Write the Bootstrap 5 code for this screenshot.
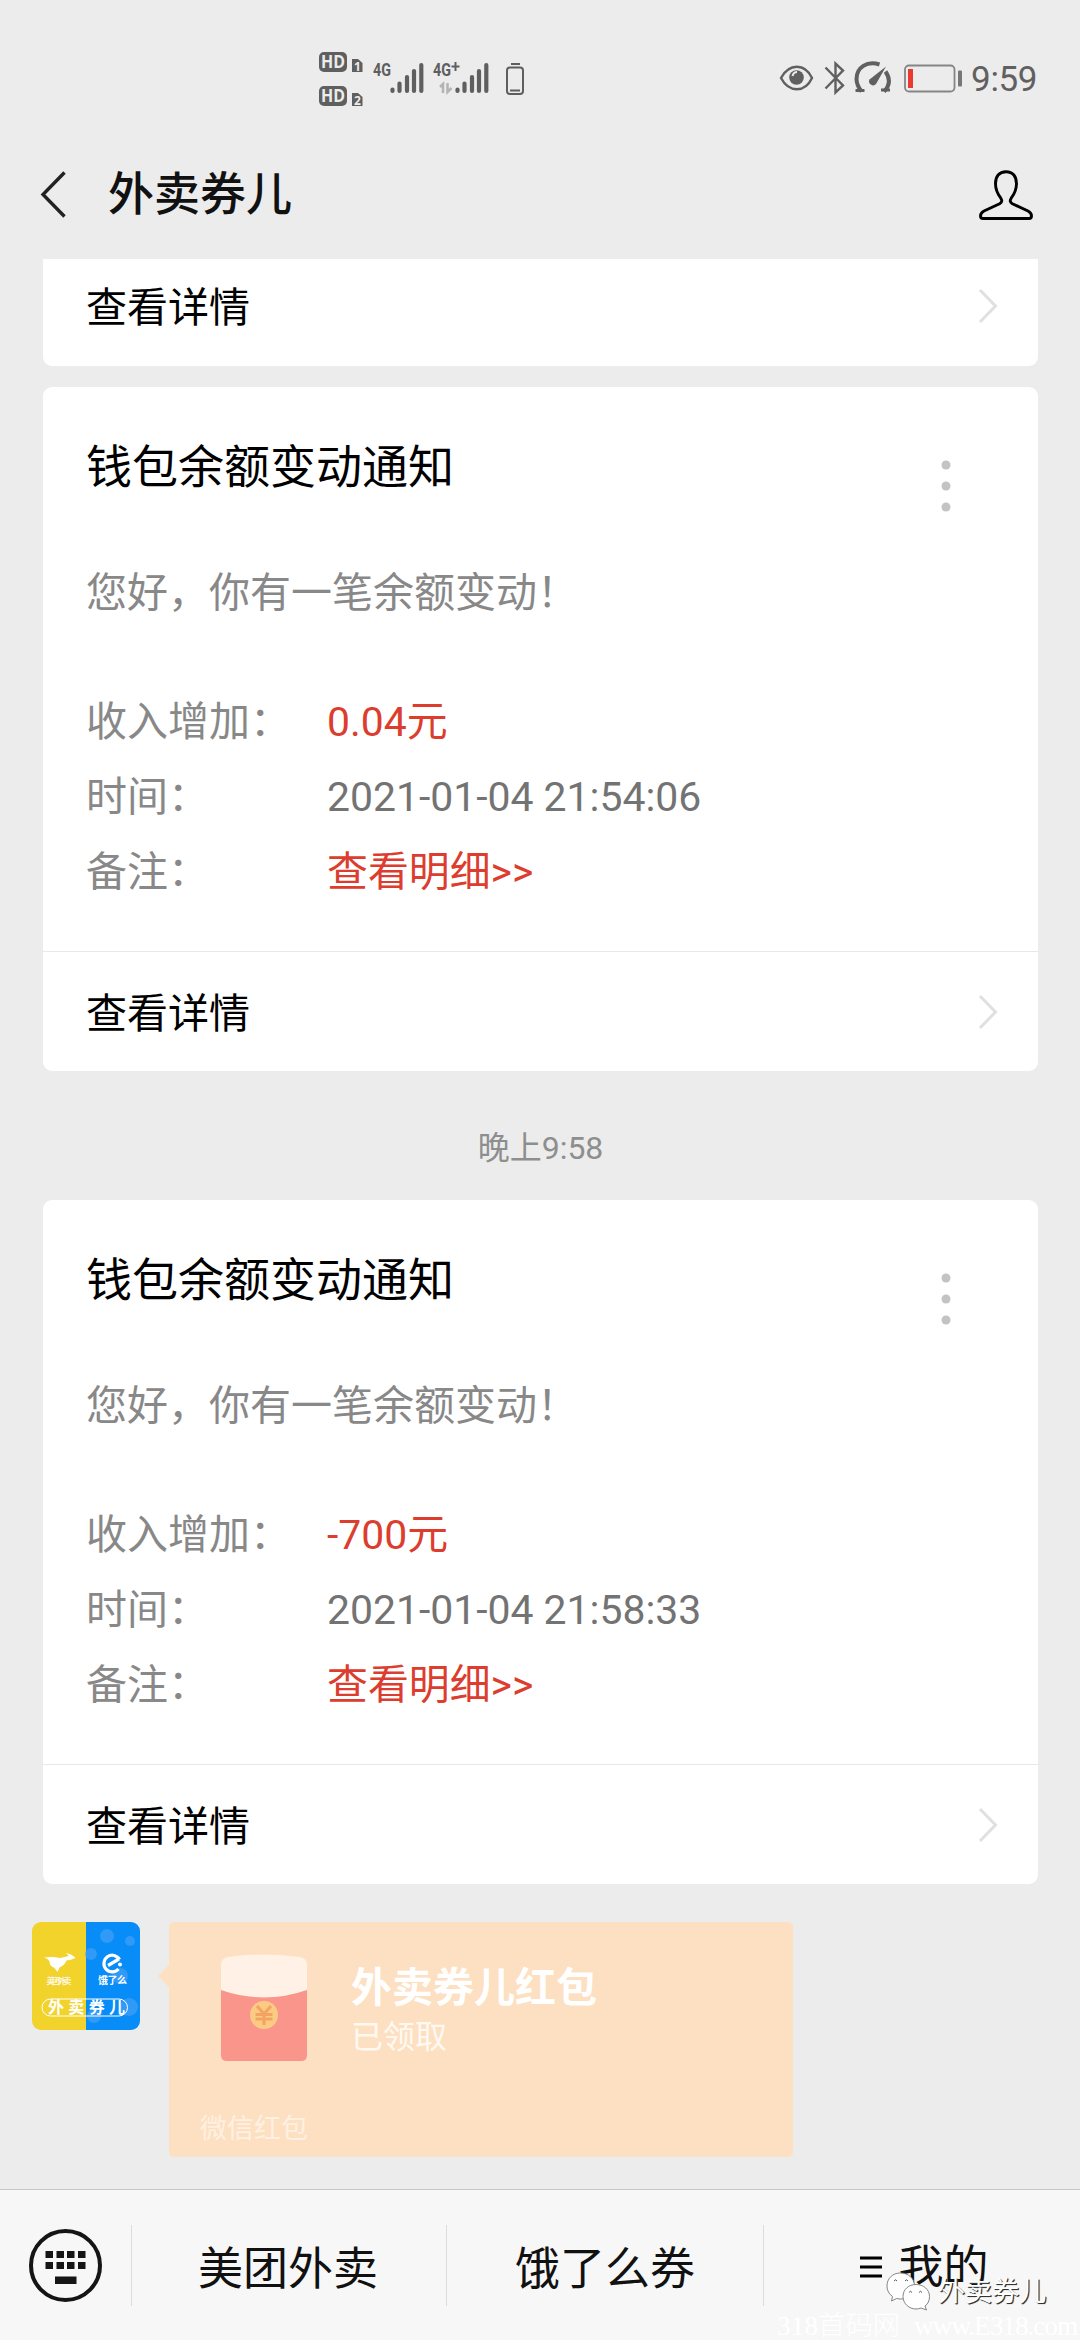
<!DOCTYPE html>
<html lang="zh-CN">
<head>
<meta charset="utf-8">
<meta name="viewport" content="width=device-width, initial-scale=1">
<title>外卖券儿</title>
<link href="https://cdn.jsdelivr.net/npm/bootstrap@5.3.0/dist/css/bootstrap.min.css" rel="stylesheet">
<style>
body{background:#ececec;font-family:Roboto,"Noto Sans CJK SC",sans-serif;color:#000;font-size:41px;line-height:1;height:2340px;overflow:hidden}
svg{display:block;flex:none}
.phone{width:1080px;height:2340px}
.statusbar{height:150px;padding:0 43px 0 319px}
.sb-left,.sb-right{height:156px}
.clock{font-size:35px;color:#606060;margin-left:8px;letter-spacing:-.4px;padding-top:2px}
.topbar{height:109px;padding:0 47px 0 40px}
.topbar h1{font-size:46px;font-weight:500;margin:0 0 0 42px;color:#111;line-height:89px}
.topbar svg{margin-top:20px}
.feed{padding:0 42px 0 43px}
.notice{border:0;border-radius:9px;background:#fff;--bs-card-border-width:0}
.notice.clipped{border-radius:0 0 9px 9px;height:107px;margin-bottom:21px}
.notice-main{height:564px;padding:0 87px 0 43px}
.notice-main h2{font-size:46px;font-weight:400;margin:0;height:158px;line-height:160px}
.notice-main .dots{margin-top:73px}
.greet{color:#888;height:94px;line-height:96px;margin:0}
.rows{margin:46px 0 0}
.rows dt{font-weight:400;color:#888;width:241px;line-height:75px}
.rows dd{margin:0;line-height:75px;color:#737373;font-size:40.900px}
.rows .hot{color:#dc3d2e}
.notice-foot{border-top:1px solid #e8e8e8;height:120px;padding:0 40px 0 43px;line-height:1}
.notice-foot span{padding-top:5px}
.clipped .notice-foot{border:0;height:93px}
.stamp{height:129px;line-height:155px;font-size:32px;color:#8e8e8e}
.msg{padding:38px 0 0 32px;height:305px}
.avatar-pic{width:108px;height:108px;border-radius:9px;overflow:hidden}
.packet{width:624px;height:235px;background:#fde0c2;border-radius:5px;margin-left:29px;color:#fff;padding:32px 0 0 52px}
.packet:before{content:"";position:absolute;left:-11px;top:42px;border:solid transparent;border-width:12px 12px 12px 0;border-right-color:#fde0c2}
.pk-info{margin-left:44px}
.pk-title{font-size:41px;font-weight:700;line-height:48px;margin-top:10px}
.pk-state{font-size:32px;line-height:36px;margin-top:7px;color:#fff9f2}
.pk-src{font-size:27px;line-height:30px;color:#fff0e2;margin:52px 0 0 -21px}
.menu{height:151px;background:#f7f7f7;border-top:1px solid #c6c6c6;font-size:45px;color:#111}
.menu .kb{width:131px;padding-left:28px}
.menu .item{height:81px;border-left:1px solid #dcdcdc;line-height:81px;padding-top:4px}
.menu .i1{width:315px;padding-right:2px}.menu .i2{width:317px}.menu .i3{width:317px;padding-left:5px}
.mark-wx{left:886px;top:2272px;color:#fff;font-size:27px;line-height:40px;letter-spacing:.1px;text-shadow:1px 1px 0 #333,1px 1px 1px #555}
.mark-site{left:777px;top:2309px;color:#fff;font-size:27.4px;line-height:34px;white-space:pre;font-family:"Liberation Serif","Noto Sans CJK SC",serif;font-weight:300}
.mark-site span{letter-spacing:-1.1px;margin-left:7px}
</style>
<script src="https://cdn.jsdelivr.net/npm/bootstrap@5.3.0/dist/js/bootstrap.bundle.min.js"></script>
</head>
<body>
<svg width="0" height="0" class="position-absolute">
  <symbol id="chev" viewBox="0 0 20 36"><path d="M2 2 17.500 18 2 34" fill="none" stroke="#e0e0e0" stroke-width="3"/></symbol>
  <symbol id="dots" viewBox="0 0 10 52"><g fill="#c3c3c3"><circle cx="5" cy="5" r="4.500"/><circle cx="5" cy="26" r="4.500"/><circle cx="5" cy="47" r="4.500"/></g></symbol>
</svg>
<div class="phone position-relative d-flex flex-column">
  <header>
    <div class="statusbar d-flex justify-content-between">
      <div class="sb-left d-flex align-items-center">
        <svg width="210" height="60" viewBox="319 48 210 60" fill="#5f5f5f" font-family="Roboto" font-weight="700">
          <rect x="319" y="52" width="28" height="20" rx="5"/><rect x="319" y="86" width="28" height="20" rx="5"/>
          <path d="M352 59h6l4.500 4v9h-10.500zM352 93h6l4.500 4v9h-10.500z"/>
          <g fill="#ececec" font-family="Open Sans"><text x="321" y="68" font-size="17" textLength="24" lengthAdjust="spacingAndGlyphs">HD</text><text x="321" y="102" font-size="17" textLength="24" lengthAdjust="spacingAndGlyphs">HD</text><text x="354" y="71" font-size="12">1</text><text x="354" y="105" font-size="12">2</text></g>
          <text x="373" y="76" font-size="19" textLength="18" lengthAdjust="spacingAndGlyphs">4G</text>
          <text x="433" y="76" font-size="19" textLength="18" lengthAdjust="spacingAndGlyphs">4G</text>
          <path d="M455.500 62v9M451.500 66.500h8" stroke="#5f5f5f" stroke-width="2"/>
          <g stroke="#5f5f5f" stroke-width="4.200" stroke-linecap="round"><path d="M392.500 89.500v1.500M399.500 83.500v7.500M407 77v14M414 71v20M421.300 65v26M457.500 89.500v1.500M464.500 83.500v7.500M472 77v14M479 71v20M486.300 65v26"/></g>
          <path d="M440 87l3-3v9M447.500 83v9l4-4" fill="none" stroke="#b4b4b4" stroke-width="2.500"/>
          <g fill="none" stroke="#5f5f5f" stroke-width="2"><rect x="507" y="67.500" width="16" height="26.500" rx="3"/><path d="M511 64h9M510 90.500h10" stroke-width="2.200"/></g>
        </svg>
      </div>
      <div class="sb-right d-flex align-items-center">
        <svg width="184" height="36" viewBox="779 60 184 36" fill="none" stroke="#606060" stroke-width="2.400">
          <path d="M781 78c8-15 24-15 31 0c-7 15-23 15-31 0z"/><circle cx="796.500" cy="77.500" r="7.300" fill="#606060" stroke="none"/><path d="M792.500 76q1-4 4.500-4" stroke="#ececec" stroke-width="2"/>
          <path d="M825.500 67.500 843 85.500 835.500 92.500V63.500L843 70.500 825.500 88.500"/>
          <g stroke-width="4"><path d="M879.500 64.500C867 60.500 856.500 67.500 856.500 79q0 6 5 12.500M885.500 71.500q7.500 11-1.500 20"/><path d="M855.500 90.500h9M881 90h9" stroke-width="3"/></g>
          <path d="M886 66.500 876 84a4 4 0 0 1-6.500-4.500z" fill="#606060" stroke="none"/>
          <rect x="905" y="65.500" width="49.500" height="26" rx="4" stroke="#858585" stroke-width="1.800"/><rect x="908" y="69" width="5" height="19" fill="#ea3b31" stroke="none"/><rect x="958" y="70.500" width="4" height="16" rx="1" fill="#777" stroke="none"/>
        </svg>
        <span class="clock">9:59</span>
      </div>
    </div>
    <div class="topbar d-flex align-items-start">
      <svg width="26" height="48" viewBox="0 0 26 48"><path d="M24.500 2.500 3 24.500 24.500 46.500" fill="none" stroke="#222" stroke-width="3.400"/></svg>
      <h1>外卖券儿</h1>
      <svg class="ms-auto" width="54" height="50" viewBox="0 0 54 50"><path d="M27 1.700c-7 0-10.500 4.800-10.500 12 0 6.800 2.500 10.700 5.300 14.500 1.700 2.500 1 4.300-1.200 5.500L5 41c-2.500 1.300-3.500 3-3.500 5 0 1.800.8 2.500 2.500 2.500h46c1.700 0 2.500-.7 2.500-2.500 0-2-1-3.700-3.500-5l-15.600-7.300c-2.200-1.200-2.900-3-1.200-5.500 2.800-3.800 5.300-7.700 5.300-14.500 0-7.200-3.500-12-10.500-12z" fill="none" stroke="#000" stroke-width="2.900"/></svg>
    </div>
  </header>

  <main class="feed">
    <section class="card notice clipped">
      <a class="notice-foot d-flex align-items-center justify-content-between text-decoration-none text-black"><span>查看详情</span><svg width="20" height="36"><use href="#chev"/></svg></a>
    </section>

    <section class="card notice">
      <div class="notice-main">
        <div class="d-flex justify-content-between"><h2>钱包余额变动通知</h2><svg class="dots" width="10" height="52"><use href="#dots"/></svg></div>
        <p class="greet">您好，你有一笔余额变动！</p>
        <dl class="rows">
          <div class="d-flex"><dt>收入增加：</dt><dd class="hot">0.04元</dd></div>
          <div class="d-flex"><dt>时间：</dt><dd>2021-01-04 21:54:06</dd></div>
          <div class="d-flex"><dt>备注：</dt><dd class="hot">查看明细&gt;&gt;</dd></div>
        </dl>
      </div>
      <a class="notice-foot d-flex align-items-center justify-content-between text-decoration-none text-black"><span>查看详情</span><svg width="20" height="36"><use href="#chev"/></svg></a>
    </section>

    <div class="stamp text-center">晚上9:58</div>

    <section class="card notice">
      <div class="notice-main">
        <div class="d-flex justify-content-between"><h2>钱包余额变动通知</h2><svg class="dots" width="10" height="52"><use href="#dots"/></svg></div>
        <p class="greet">您好，你有一笔余额变动！</p>
        <dl class="rows">
          <div class="d-flex"><dt>收入增加：</dt><dd class="hot">-700元</dd></div>
          <div class="d-flex"><dt>时间：</dt><dd>2021-01-04 21:58:33</dd></div>
          <div class="d-flex"><dt>备注：</dt><dd class="hot">查看明细&gt;&gt;</dd></div>
        </dl>
      </div>
      <a class="notice-foot d-flex align-items-center justify-content-between text-decoration-none text-black"><span>查看详情</span><svg width="20" height="36"><use href="#chev"/></svg></a>
    </section>
  </main>

  <div class="msg d-flex align-items-start">
    <div class="avatar-pic">
      <svg width="108" height="108" viewBox="0 0 108 108" font-family="Noto Sans CJK SC" fill="#fff">
        <rect width="54" height="108" fill="#f2d32c"/><rect x="54" width="54" height="108" fill="#088df8"/>
        <g fill="#4ba3f5" opacity=".6"><circle cx="75" cy="14" r="7"/><circle cx="98" cy="19" r="5"/><circle cx="59" cy="32" r="6"/><circle cx="88" cy="54" r="8"/><circle cx="62" cy="94" r="7"/><circle cx="97" cy="85" r="9"/></g>
        <path d="M12 35.500q9-1 16 .5 5-1 9-2l-3-3q6 1 9.500 5-5 2-9 2.500-2 5-7 7l-2 4.500-3-4q-5-2-5-6.500-1-2.500-5.500-4z"/>
        <text x="14.500" y="62" font-size="8.200" font-weight="700" textLength="25" opacity=".85">美团外卖</text>
        <path d="M87.500 37.500A8.300 8.300 0 1 0 86.500 47M76 43.500l11-6.500" fill="none" stroke="#fff" stroke-width="3.200"/><circle cx="88" cy="42.500" r="2"/>
        <text x="66" y="62" font-size="10" font-weight="700" textLength="29">饿了么</text>
        <rect x="10" y="77" width="85.500" height="17" rx="8.500" fill="none" stroke="#fff" stroke-width="1"/>
        <text x="16" y="91" font-size="16" font-weight="700" textLength="77">外卖券儿</text>
      </svg>
    </div>
    <div class="packet position-relative">
      <div class="d-flex">
        <svg width="86" height="108" viewBox="0 0 86 108"><path d="M0 34h86v67q0 6-6 6H6q-6 0-6-6z" fill="#fa958b"/><path d="M0 11Q0 4 7 3Q43-2 79 3Q86 4 86 11V36Q43 51 0 36z" fill="#fff1e6"/><circle cx="43" cy="61" r="14" fill="#fccb83"/><path d="M36 52l7 8 7-8M34.500 60.500h17M34.500 65h17M43 60v11" fill="none" stroke="#f3a463" stroke-width="3"/></svg>
        <div class="pk-info"><div class="pk-title">外卖券儿红包</div><div class="pk-state">已领取</div></div>
      </div>
      <div class="pk-src">微信红包</div>
    </div>
  </div>

  <nav class="menu d-flex align-items-center">
    <div class="kb"><svg width="75" height="75" viewBox="0 0 75 75" fill="#151515"><circle cx="37.500" cy="37.500" r="34.500" fill="none" stroke="#151515" stroke-width="4"/><path d="M17.500 23h7.500v7h-7.500zM28.500 23h7.500v7h-7.500zM39 23h7.500v7H39zM50 23h7.500v7H50zM17.500 34h7.500v7h-7.500zM28.500 34h7.500v7h-7.500zM39 34h7.500v7H39zM50 34h7.500v7H50zM27 48.500h21.500V56H27z"/></svg></div>
    <div class="item i1 text-center">美团外卖</div>
    <div class="item i2 text-center">饿了么券</div>
    <div class="item i3 d-flex align-items-center justify-content-center"><svg class="me-3" width="22" height="22" viewBox="0 0 22 22"><path d="M0 2h22M0 11h22M0 20h22" stroke="#000" stroke-width="2.800"/></svg>我的</div>
  </nav>

  <div class="mark-wx position-absolute d-flex align-items-start">
    <svg width="44" height="40" viewBox="0 0 44 40" fill="#fff" stroke="#777" stroke-width=".9"><path d="M14.500 1C6.500 1 1 6.500 1 14c0 4.500 2 8 5.500 10.500L5.500 29l5-2.500c10 2.500 18-4 18-12.500C28.500 6.500 22.500 1 14.500 1z"/><path d="M30 12.500c-7.500 0-13 5-13 12s6 12.500 13 12.500c2 0 3.500-.3 5-1l5.500 2-1.500-4c3-2 4.500-5.500 4.500-9.500 0-7-6-12-13.500-12z"/><path d="M8 9q1.500-2.500 3 0M19 9q1.500-2.500 3 0M23 20.500q1.500-2.500 3 0M33 20.500q1.500-2.500 3 0" fill="none" stroke="#444"/></svg>
    <span class="ms-2">外卖券儿</span>
  </div>
  <div class="mark-site position-absolute">318首码网 <span>www.E318.com</span></div>
</div>
</body>
</html>
